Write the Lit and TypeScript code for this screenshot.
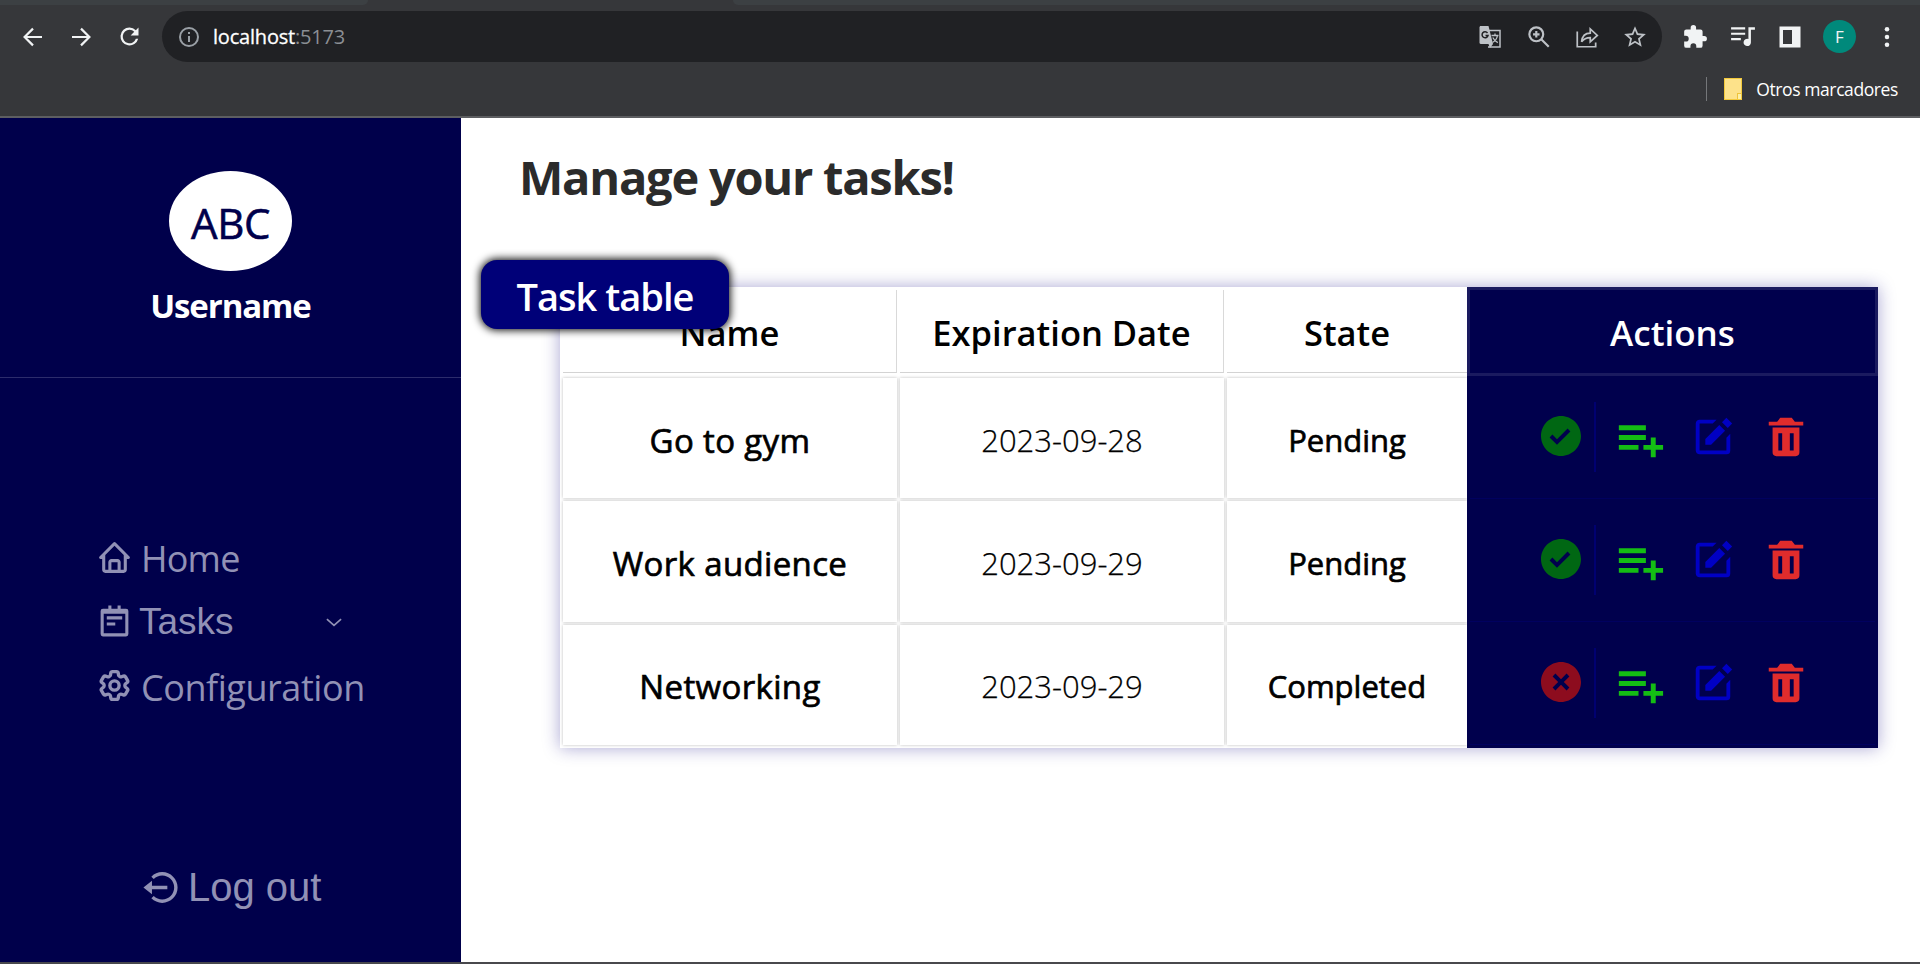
import { LitElement, html, svg, css } from "lit";
import { customElement } from "lit/decorators.js";

const shapes: Record<string, any> = {
  back: svg`<path d="M21 12H4M12 3.6 3.6 12l8.400 8.400" fill="none" stroke="currentColor" stroke-width="2.200"/>`,
  forward: svg`<path d="M3 12h17M12 3.600l8.400 8.400-8.400 8.400" fill="none" stroke="currentColor" stroke-width="2.200"/>`,
  reload: svg`<path d="M17.65 6.350A7.960 7.960 0 0 0 12 4a8 8 0 1 0 7.730 10h-2.080A6 6 0 1 1 12 6c1.660 0 3.140.690 4.220 1.780L13 11h7V4z"/>`,
  info: svg`<circle cx="12" cy="12" r="9" fill="none" stroke="currentColor" stroke-width="2"/><path d="M11 11h2v6h-2zM11 7h2v2h-2z"/>`,
  zoom: svg`<circle cx="9.500" cy="9.500" r="6.400" fill="none" stroke="currentColor" stroke-width="2"/><path d="M14.300 14.300 21 21M9.500 6.500v6M6.500 9.500h6" fill="none" stroke="currentColor" stroke-width="2"/>`,
  share: svg`<path d="M3 7v14h17v-4M7 16.500c.5-5 3.500-8 8-8V4.500l6.500 6-6.500 6v-4c-3.500 0-6 1-8 4z" fill="none" stroke="currentColor" stroke-width="1.600"/>`,
  star: svg`<path d="m22 9.240-7.190-.620L12 2 9.190 8.630 2 9.240l5.460 4.730L5.820 21 12 17.270 18.180 21l-1.630-7.030zM12 15.400l-3.760 2.270 1-4.280-3.320-2.880 4.380-.380L12 6.100l1.710 4.040 4.380.380-3.320 2.880 1 4.280z"/>`,
  puzzle: svg`<path d="M20.500 11H19V7a2 2 0 0 0-2-2h-4V3.500a2.500 2.500 0 0 0-5 0V5H4a2 2 0 0 0-2 2v3.800h1.500a2.700 2.700 0 0 1 0 5.400H2V20a2 2 0 0 0 2 2h3.800v-1.500a2.700 2.700 0 0 1 5.400 0V22H17a2 2 0 0 0 2-2v-4h1.500a2.500 2.500 0 0 0 0-5z"/>`,
  music: svg`<path d="M1 3h13v2H1zM1 8h13v2H1zM1 13h9v2H1zM17 3h6v2.200h-3.700V17a3.400 3.400 0 1 1-2.300-3.200z"/>`,
  panel: svg`<path d="M1.500 1.500h21v21h-21zM5 5v14h9V5z" fill-rule="evenodd"/>`,
  dots: svg`<circle cx="12" cy="4.800" r="2.100"/><circle cx="12" cy="12" r="2.100"/><circle cx="12" cy="19.200" r="2.100"/>`,
  home: svg`<path d="M3 13h1v7c0 1.103.897 2 2 2h12c1.103 0 2-.897 2-2v-7h1a1 1 0 0 0 .707-1.707l-9-9a.999.999 0 0 0-1.414 0l-9 9A1 1 0 0 0 3 13zm7 7v-5h4v5h-4zm2-15.586 6 6V20h-2v-5c0-1.103-.897-2-2-2h-4c-1.103 0-2 .897-2 2v5H6v-9.586l6-6z"/>`,
  tasks: svg`<path fill-rule="evenodd" d="M8 1h2v2h4V1h2v2h3.500A1.500 1.500 0 0 1 21 4.500v15a1.500 1.500 0 0 1-1.500 1.500h-15A1.500 1.500 0 0 1 3 19.500v-15A1.500 1.500 0 0 1 4.500 3H8zM5 6.300V19h14V6.300zM7 8h10v2H7zM7 12h5.500v2H7z"/>`,
  gear: svg`<g fill="none" stroke="currentColor" stroke-width="2.200"><path d="M9.594 3.940c.090-.542.560-.940 1.110-.940h2.593c.550 0 1.020.398 1.110.940l.213 1.281c.063.374.313.686.645.870.074.040.147.083.220.127.325.196.720.257 1.075.124l1.217-.456a1.125 1.125 0 0 1 1.370.490l1.296 2.247a1.125 1.125 0 0 1-.260 1.431l-1.003.827c-.293.241-.438.613-.430.992a7.723 7.723 0 0 1 0 .255c-.008.378.137.750.430.991l1.004.827c.424.350.534.955.260 1.430l-1.298 2.247a1.125 1.125 0 0 1-1.369.491l-1.217-.456c-.355-.133-.750-.072-1.076.124a6.470 6.470 0 0 1-.220.128c-.331.183-.581.495-.644.869l-.213 1.281c-.090.543-.560.940-1.110.940h-2.594c-.550 0-1.019-.398-1.110-.940l-.213-1.281c-.062-.374-.312-.686-.644-.870a6.520 6.520 0 0 1-.220-.127c-.325-.196-.720-.257-1.076-.124l-1.217.456a1.125 1.125 0 0 1-1.369-.490l-1.297-2.247a1.125 1.125 0 0 1 .260-1.431l1.004-.827c.292-.240.437-.613.430-.991a6.932 6.932 0 0 1 0-.255c.007-.380-.138-.751-.430-.992l-1.004-.827a1.125 1.125 0 0 1-.260-1.430l1.297-2.247a1.125 1.125 0 0 1 1.370-.491l1.216.456c.356.133.751.072 1.076-.124.072-.044.146-.086.220-.128.332-.183.582-.495.644-.869z"/><circle cx="12" cy="12" r="3"/></g>`,
  chevron: svg`<path d="M3.500 8.500 12 16l8.500-7.500" fill="none" stroke="currentColor" stroke-width="2"/>`,
  logout: svg`<path d="m2 12 5 4v-3h9v-2H7V8z"/><path d="M13.001 2.999a8.938 8.938 0 0 0-6.364 2.637L8.051 7.050c1.322-1.322 3.080-2.051 4.950-2.051s3.628.729 4.950 2.051 2.051 3.080 2.051 4.950-.729 3.628-2.051 4.950-3.080 2.051-4.950 2.051-3.628-.729-4.950-2.051l-1.414 1.414c1.699 1.700 3.959 2.637 6.364 2.637s4.665-.937 6.364-2.637C21.063 16.665 22 14.405 22 12s-.937-4.665-2.635-6.364a8.938 8.938 0 0 0-6.364-2.637z"/>`,
  check: svg`<path d="M12 2C6.486 2 2 6.486 2 12s4.486 10 10 10 10-4.486 10-10S17.514 2 12 2zm-1.999 14.413-3.713-3.705L7.700 11.292l2.299 2.295 5.294-5.294 1.414 1.414-6.706 6.706z"/>`,
  cross: svg`<path d="M12 2C6.486 2 2 6.486 2 12s4.486 10 10 10 10-4.486 10-10S17.514 2 12 2zm4.207 12.793-1.414 1.414L12 13.414l-2.793 2.793-1.414-1.414L10.586 12 7.793 9.207l1.414-1.414L12 10.586l2.793-2.793 1.414 1.414L13.414 12l2.793 2.793z"/>`,
  list: svg`<path d="M19 15v-3h-2v3h-3v2h3v3h2v-3h3v-2zM4 7h11v2H4zm0 4h11v2H4zm0 4h8v2H4z"/>`,
  edit: svg`<path d="m18.988 2.012 3 3L19.701 7.300l-3-3zM8 16h3l7.287-7.287-3-3L8 13z"/><path d="M19 19H5V5h6.847l2-2H5c-1.103 0-2 .896-2 2v14c0 1.104.897 2 2 2h14a2 2 0 0 0 2-2v-8.668l-2 2V19z"/>`,
  trash: svg`<path d="M6 7H5v13a2 2 0 0 0 2 2h10a2 2 0 0 0 2-2V7H6zm4 12H8v-9h2v9zm6 0h-2v-9h2v9zm.618-15L15 2H9L7.382 4H3v2h18V4z"/>`,
};

const icon = (name: string, cls = "") =>
  html`<svg class="icon ${cls}" viewBox="0 0 24 24" fill="currentColor">${shapes[name]}</svg>`;

const shared = css`
  * { box-sizing: border-box; }
  .icon { display: block; flex: none; }
`;

@customElement("browser-bar")
class BrowserBar extends LitElement {
  static styles = [shared, css`
    :host { display: block; height: 118px; overflow: hidden; background: #36373a; border-bottom: 2px solid #5d5e61; font-family: "Open Sans", sans-serif; }
    .tabs { height: 5px; display: flex; }
    .tab { background: #3c4043; }
    .tab.first { width: 368px; border-bottom-right-radius: 5px; }
    .tab.rest { flex: 1; margin-left: 365px; border-bottom-left-radius: 5px; }
    .tools { display: flex; align-items: center; height: 51px; margin-top: 6px; color: #f1f3f4; }
    .nav { width: 24px; height: 24px; margin-right: 24px; }
    .nav:first-child { margin-left: 21px; }
    .nav.last { width: 27px; height: 27px; margin: 0 19px 0 -1px; }
    .omni { flex: none; width: 1500px; height: 51px; border-radius: 26px; background: #202124; display: flex; align-items: center; color: #bdc1c6; padding-left: 15px; }
    .info { width: 24px; height: 24px; margin-top: 1px; color: #9aa0a6; margin-right: 12px; }
    .url { flex: 1; font-size: 20px; letter-spacing: -0.200px; line-height: 28px; color: #8b8f94; }
    .host { color: #fff; -webkit-text-stroke: 0.300px #fff; }
    .o { width: 26px; height: 26px; margin-right: 22px; }
    .o.tr { width: 22px; height: 22px; margin-right: 25px; }
    .o.star { margin-right: 14px; }
    .t { width: 26px; height: 26px; margin-right: 22px; }
    .puzzle { margin-left: 20px; }
    .panel { width: 24px; height: 24px; }
    .avatar { flex: none; width: 33px; height: 33px; border-radius: 50%; background: #00897b; display: flex; align-items: center; justify-content: center; font-size: 17px; margin-right: 18px; margin-left: -1px; }
    .t.dots { margin-right: 0; }
    .marks { display: flex; align-items: center; justify-content: flex-end; height: 54px; padding-right: 22px; color: #fff; }
    .sep { width: 1px; height: 24px; background: #75777a; margin-right: 17px; }
    .folder { width: 18px; height: 22px; background: #fde28a; border: 1px solid #f3c93c; margin-right: 14px; display: flex; justify-content: flex-end; align-items: flex-end; }
    .fold { width: 4px; height: 6px; background: #fdf0a8; border: 1px solid #eec33a; border-width: 1px 0 0 1px; }
    .label { font-size: 17.500px; line-height: 26px; letter-spacing: -0.400px; padding-bottom: 1px; }
  `];
  render() {
    return html`
      <div class="tabs"><div class="tab first"></div><div class="tab rest"></div></div>
      <div class="tools">
        ${icon("back", "nav")}${icon("forward", "nav")}${icon("reload", "nav last")}
        <div class="omni">
          ${icon("info", "info")}
          <div class="url"><span class="host">localhost</span>:5173</div>
          <svg class="icon o tr" viewBox="0 0 22 22" fill="none">
            <path d="M10 4.500h11v16.500H9" stroke="#bdc1c6" stroke-width="1.500"/>
            <path d="M1 0h8.500L14 18H2a1.500 1.500 0 0 1-1.500-1.500v-15z" fill="#bdc1c6"/>
            <path d="M14 18l-3 4-1.500-4z" fill="#bdc1c6"/>
            <path d="M8.500 7A3 3 0 1 0 9 9.500H6.500" stroke="#202124" stroke-width="1.500"/>
            <path d="M12.500 9.500h7M16 7.500v2M18.500 9.500c-.5 3-2.500 5.500-5 7M13.800 11.500c1 2 2.500 4 5 5.200" stroke="#bdc1c6" stroke-width="1.300"/>
          </svg>
          ${icon("zoom", "o")}${icon("share", "o")}${icon("star", "o star")}
        </div>
        ${icon("puzzle", "t puzzle")}${icon("music", "t")}${icon("panel", "t panel")}
        <div class="avatar">F</div>
        ${icon("dots", "t dots")}
      </div>
      <div class="marks"><div class="sep"></div><div class="folder"><div class="fold"></div></div><div class="label">Otros marcadores</div></div>
    `;
  }
}

@customElement("side-menu")
class SideMenu extends LitElement {
  static styles = [shared, css`
    :host { display: flex; flex-direction: column; width: 461px; background: #00004b; color: #9191b5; font-family: "Open Sans", sans-serif; }
    .profile { height: 260px; border-bottom: 1px solid #2c2c6c; display: flex; flex-direction: column; align-items: center; padding-top: 53px; }
    .avatar { width: 123px; height: 100px; border-radius: 50%; background: #fff; color: #00004b; font-size: 42px; line-height: 103px; text-align: center; -webkit-text-stroke: 0.600px #00004b; letter-spacing: -0.300px; }
    .user { color: #fff; font-weight: 700; font-size: 33px; line-height: 44px; margin-top: 13px; letter-spacing: -1.100px; }
    .nav { margin-top: 156px; padding-left: 96px; }
    .item { display: flex; align-items: center; height: 50px; font-size: 36px; line-height: 50px; }
    .item .icon { width: 37px; height: 37px; }
    .home .icon { margin-bottom: 4px; }
    .home .text { letter-spacing: -0.800px; margin-left: 8px; }
    .config .icon { margin-bottom: 6px; }
    .config .text { letter-spacing: -0.450px; margin-left: 8px; }
    .arial { font-family: "Liberation Sans", sans-serif; }
    .tasks { margin-top: 13px; font-size: 37px; }
    .tasks .text { margin-left: 6px; }
    .config { margin-top: 16px; }
    .item .chev { width: 20px; height: 20px; margin: 0 0 0 90px; }
    .logout { display: flex; align-items: center; margin: 148px 0 0 140px; font-size: 40px; line-height: 52px; }
    .logout .icon { width: 41px; height: 41px; margin-right: 7px; }
  `];
  render() {
    return html`
      <div class="profile"><div class="avatar">ABC</div><div class="user">Username</div></div>
      <div class="nav">
        <div class="item home">${icon("home")}<span class="text">Home</span></div>
        <div class="item tasks">${icon("tasks")}<span class="text arial">Tasks</span>${icon("chevron", "chev")}</div>
        <div class="item config">${icon("gear")}<span class="text">Configuration</span></div>
      </div>
      <div class="logout arial">${icon("logout")}<span>Log out</span></div>
    `;
  }
}

const tasks = [
  { name: "Go to gym", date: "2023-09-28", state: "Pending", mark: "check" },
  { name: "Work audience", date: "2023-09-29", state: "Pending", mark: "check" },
  { name: "Networking", date: "2023-09-29", state: "Completed", mark: "cross" },
];

@customElement("task-table")
class TaskTable extends LitElement {
  static styles = [shared, css`
    :host { display: flex; width: 1318px; height: 461px; background: #fff; color: #000; box-shadow: 0 0 16px rgba(30, 20, 140, 0.380); font-family: "Open Sans", sans-serif; }
    .data { width: 907px; padding: 3px 0 0 3px; }
    .row { display: grid; grid-template-columns: 334px 324px 240px; column-gap: 3px; height: 120.330px; margin-bottom: 3px; }
    .head { height: 83px; margin-bottom: 5px; font-size: 34.500px; font-weight: 600; }
    .cell { display: flex; align-items: center; justify-content: center; font-size: 31px; padding-top: 3px; box-shadow: 0 0 3px rgba(0, 0, 0, 0.260); white-space: nowrap; -webkit-text-stroke: 0.700px #000; }
    .name { font-size: 33px; letter-spacing: 0.350px; padding-top: 4px; }
    .head .cell { box-shadow: none; font: inherit; letter-spacing: inherit; padding-top: 3px; -webkit-text-stroke: 0; border-right: 1px solid #d9d9d9; border-bottom: 1px solid #d3d3d3; }
    .head .cell:last-child { border-right: 0; }
    .date { font-weight: 300; -webkit-text-stroke: 0.250px #000; }
    .actions { width: 411px; background: #00004d; }
    .title { height: 89px; border: 3px solid #1a1a5f; padding-top: 2px; color: #fff; font-size: 35px; font-weight: 600; display: flex; align-items: center; justify-content: center; }
    .tools { display: flex; align-items: flex-start; height: 123px; border-bottom: 1px solid #00005f; margin: 0 3px; padding-left: 67px; }
    .mark { width: 48px; height: 48px; margin-top: 36px; }
    .check { color: #006713; }
    .cross { color: #8d0c1e; }
    .bar { width: 2px; height: 70px; background: #000070; margin: 26px 0 0 9px; }
    .list { width: 59px; height: 59px; margin: 32px 0 0 13px; color: #14bd14; }
    .edit { width: 46px; height: 46px; margin: 38px 0 0 21.500px; color: #0000c4; }
    .trash { width: 46px; height: 46px; margin: 38px 0 0 27px; color: #e02c2c; }
  `];
  render() {
    return html`
      <div class="data">
        <div class="row head"><div class="cell"><span>Name</span></div><div class="cell"><span>Expiration Date</span></div><div class="cell"><span>State</span></div></div>
        ${tasks.map((t) => html`<div class="row">
          <div class="cell name"><span>${t.name}</span></div><div class="cell date"><span>${t.date}</span></div><div class="cell"><span>${t.state}</span></div>
        </div>`)}
      </div>
      <div class="actions">
        <div class="title"><span>Actions</span></div>
        ${tasks.map((t) => html`<div class="tools">
          ${icon(t.mark, `mark ${t.mark}`)}<div class="bar"></div>${icon("list", "list")}${icon("edit", "edit")}${icon("trash", "trash")}
        </div>`)}
      </div>
    `;
  }
}

@customElement("app-root")
class AppRoot extends LitElement {
  static styles = [shared, css`
    :host { display: block; height: 964px; overflow: hidden; background: #fff; font-family: "Open Sans", sans-serif; }
    .page { display: flex; height: 846px; border-bottom: 2px solid #48484c; }
    .main { position: relative; flex: 1; padding: 26px 0 0 99px; }
    .heading { margin: 0 0 0 -41px; font-size: 47px; line-height: 66px; font-weight: 700; color: #2b2b2b; letter-spacing: -1.230px; }
    .table { margin-top: 77px; }
    .badge { position: absolute; left: 20px; top: 142px; width: 248px; height: 69px; border-radius: 16px; background: #000078; color: #fff; font-size: 38px; font-weight: 600; line-height: 73px; letter-spacing: -1px; text-align: center; box-shadow: 0 0 9px 1px #000; }
  `];
  render() {
    return html`
      <browser-bar></browser-bar>
      <div class="page">
        <side-menu></side-menu>
        <div class="main">
          <h1 class="heading">Manage your tasks!</h1>
          <task-table class="table"></task-table>
          <div class="badge">Task table</div>
        </div>
      </div>
    `;
  }
}
